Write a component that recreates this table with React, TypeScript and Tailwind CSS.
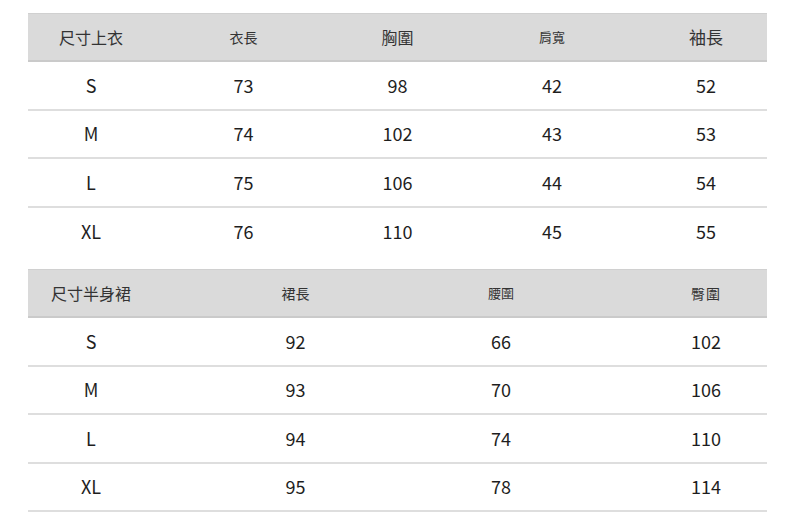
const font = "font-['Noto_Sans_CJK_TC','Noto_Sans',sans-serif]";

type Col = { label: string; size: string; cls: string };

const topCols: Col[] = [
  { label: "尺寸上衣", size: "text-[16px]", cls: "pr-[13px]" },
  { label: "衣長", size: "text-[14px]", cls: "" },
  { label: "胸圍", size: "text-[16px]", cls: "" },
  { label: "肩寬", size: "text-[13px]", cls: "" },
  { label: "袖長", size: "text-[17px]", cls: "pl-[16px]" },
];

const topRows = [
  ["S", "73", "98", "42", "52"],
  ["M", "74", "102", "43", "53"],
  ["L", "75", "106", "44", "54"],
  ["XL", "76", "110", "45", "55"],
];

const skirtCols: Col[] = [
  { label: "尺寸半身裙", size: "text-[16px]", cls: "pr-[39px]" },
  { label: "裙長", size: "text-[14px]", cls: "" },
  { label: "腰圍", size: "text-[13px]", cls: "" },
  { label: "臀圍", size: "text-[14px] tracking-[1px]", cls: "pl-[41px]" },
];

const skirtRows = [
  ["S", "92", "66", "102"],
  ["M", "93", "70", "106"],
  ["L", "94", "74", "110"],
  ["XL", "95", "78", "114"],
];

const SizeTable = ({
  cols,
  rows,
  grid,
  lastLine,
}: {
  cols: Col[];
  rows: string[][];
  grid: string;
  lastLine: boolean;
}) => {
  return (
    <div className="w-[739px]">
      {/* Header */}
      <div
        className={`grid ${grid} h-[49px] bg-[#dadada] border-t border-[#d0d0d0] border-b-2 border-b-[#cacaca] text-[#333]`}
      >
        {cols.map((c) => (
          <div key={c.label} className={`flex items-center justify-center ${c.size} ${c.cls}`}>
            {c.label}
          </div>
        ))}
      </div>

      {/* Rows */}
      {rows.map((r, i) => (
        <div
          key={r[0]}
          className={`grid ${grid} h-[48.5px] text-[18px] text-[#1e1e1e] ${
            i < rows.length - 1 || lastLine ? "border-b-2 border-[#dedede]" : ""
          }`}
        >
          {r.map((v, j) => (
            <div key={j} className={`flex items-center justify-center ${cols[j].cls}`}>
              {v}
            </div>
          ))}
        </div>
      ))}
    </div>
  );
};

export default function App() {
  return (
    <div className={`w-[790px] h-[520px] bg-white pl-[28px] pt-[13px] ${font}`}>
      <SizeTable
        cols={topCols}
        rows={topRows}
        grid="grid-cols-[139px_153px_155px_154px_138px]"
        lastLine={false}
      />
      <div className="h-[13px]" />
      <SizeTable
        cols={skirtCols}
        rows={skirtRows}
        grid="grid-cols-[165px_205px_206px_163px]"
        lastLine={true}
      />
    </div>
  );
}
